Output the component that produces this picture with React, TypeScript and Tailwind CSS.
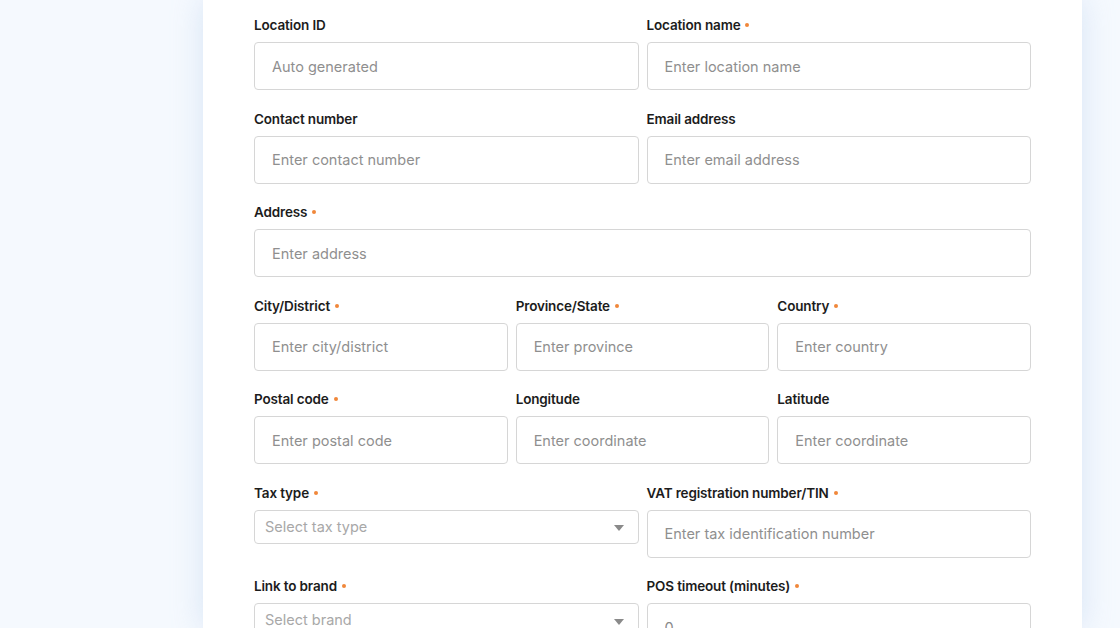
import type { ReactNode } from "react";

const font = { fontFamily: "Inter, 'Noto Sans', sans-serif" };

function Label({ text, required }: { text: string; required?: boolean }) {
	return (
		<div className="flex h-5 items-center gap-[5px] text-[13.5px] font-semibold leading-5 tracking-[-0.15px] text-[#1c1c1c]">
			<span>{text}</span>
			{required && (
				<span className="inline-block h-[4px] w-[4px] rounded-full bg-[#f0873a]" />
			)}
		</div>
	);
}

function Field({
	label,
	required,
	children,
}: {
	label: string;
	required?: boolean;
	children: ReactNode;
}) {
	return (
		<div className="flex min-w-0 flex-col gap-[7px]">
			<Label text={label} required={required} />
			{children}
		</div>
	);
}

function TextInput({
	placeholder,
	value,
}: {
	placeholder: string;
	value?: string;
}) {
	return (
		<input
			type="text"
			placeholder={placeholder}
			defaultValue={value}
			className="h-12 w-full rounded-[4px] border border-[#d6d6d6] bg-white px-[17px] text-[14.5px] text-[#8a8a8a] outline-none placeholder:text-[#8f8f8f]"
			style={font}
		/>
	);
}

function SelectBox({ placeholder }: { placeholder: string }) {
	return (
		<div className="flex h-[34px] w-full items-center justify-between rounded-[4px] border border-[#d6d6d6] bg-white pr-[14px] pl-[10px]">
			<span className="text-[14.5px] text-[#a8a8a8]">{placeholder}</span>
			<svg width="10" height="6" viewBox="0 0 10 6" className="mt-[3px]">
				<path d="M0 0h10L5 6z" fill="#8a8a8a" />
			</svg>
		</div>
	);
}

export default function App() {
	return (
		<div
			className="flex h-screen w-full overflow-hidden bg-[#f5f9fe] pl-[203px]"
			style={font}
		>
			<div className="w-[879px] shrink-0 bg-white px-[51px] pt-[15px] shadow-[0_0_28px_rgba(180,205,235,0.45)]">
				<div className="flex flex-col gap-[18.5px]">
					<div className="grid grid-cols-2 gap-x-2">
						<Field label="Location ID">
							<TextInput placeholder="Auto generated" />
						</Field>
						<Field label="Location name" required>
							<TextInput placeholder="Enter location name" />
						</Field>
					</div>
					<div className="grid grid-cols-2 gap-x-2">
						<Field label="Contact number">
							<TextInput placeholder="Enter contact number" />
						</Field>
						<Field label="Email address">
							<TextInput placeholder="Enter email address" />
						</Field>
					</div>
					<Field label="Address" required>
						<TextInput placeholder="Enter address" />
					</Field>
					<div className="grid grid-cols-3 gap-x-2">
						<Field label="City/District" required>
							<TextInput placeholder="Enter city/district" />
						</Field>
						<Field label="Province/State" required>
							<TextInput placeholder="Enter province" />
						</Field>
						<Field label="Country" required>
							<TextInput placeholder="Enter country" />
						</Field>
					</div>
					<div className="grid grid-cols-3 gap-x-2">
						<Field label="Postal code" required>
							<TextInput placeholder="Enter postal code" />
						</Field>
						<Field label="Longitude">
							<TextInput placeholder="Enter coordinate" />
						</Field>
						<Field label="Latitude">
							<TextInput placeholder="Enter coordinate" />
						</Field>
					</div>
					<div className="grid grid-cols-2 items-start gap-x-2">
						<Field label="Tax type" required>
							<SelectBox placeholder="Select tax type" />
						</Field>
						<Field label="VAT registration number/TIN" required>
							<TextInput placeholder="Enter tax identification number" />
						</Field>
					</div>
					<div className="grid grid-cols-2 items-start gap-x-2">
						<Field label="Link to brand" required>
							<SelectBox placeholder="Select brand" />
						</Field>
						<Field label="POS timeout (minutes)" required>
							<TextInput placeholder="" value="0" />
						</Field>
					</div>
				</div>
			</div>
		</div>
	);
}
